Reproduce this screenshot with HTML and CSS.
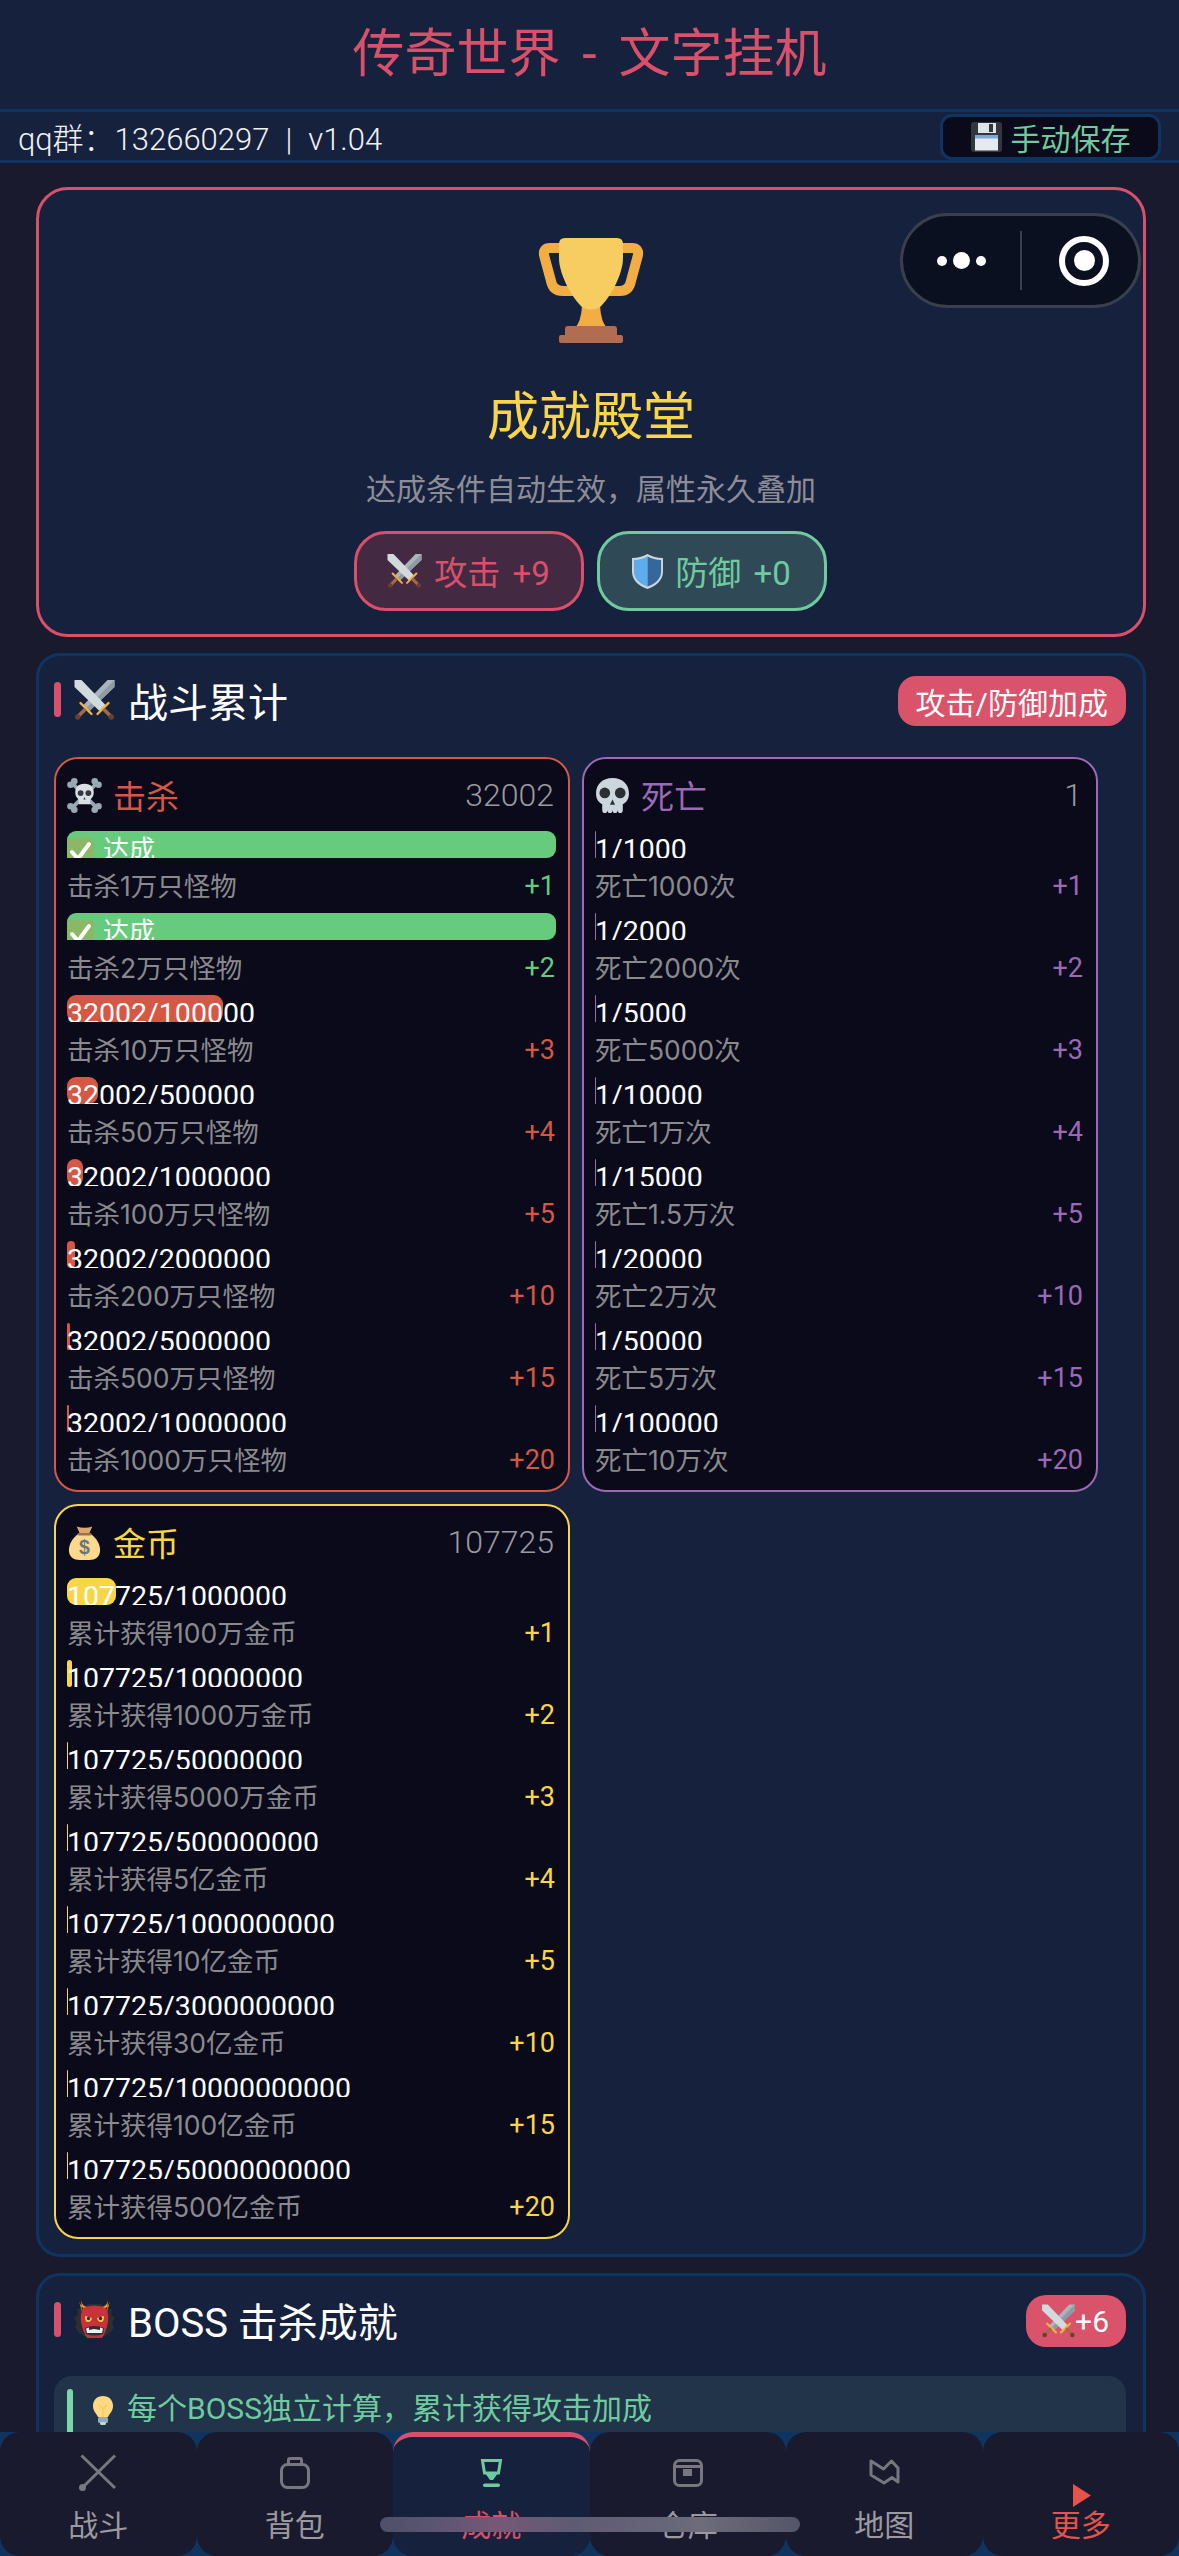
FILE: index.html
```html
<!DOCTYPE html>
<html lang="zh-CN">
<head>
  <meta charset="UTF-8">
  <meta name="viewport" content="width=device-width, initial-scale=1.0">
  <title>传奇世界 - 文字挂机</title>
  <link rel="stylesheet" href="styles.css">
</head>
<body>
  <!-- emoji drawn as symbols, there is no colour emoji font -->
  <svg class="defs" aria-hidden="true">
    <symbol id="swords" viewBox="0 0 40 40">
      <path d="M40 0H33L9 25L15 31L40 7Z" fill="#a9b4bb"/>
      <path d="M40 0L12 28L15 31L40 7Z" fill="#8f9ba3"/>
      <path d="M0 0H7L31 25L25 31L0 7Z" fill="#d3dade"/>
      <path d="M6 23L17 34" stroke="#f2b33d" stroke-width="2.4" stroke-linecap="round"/>
      <path d="M34 23L23 34" stroke="#f2b33d" stroke-width="2.4" stroke-linecap="round"/>
      <path d="M11 29L4 36M29 29L36 36" stroke="#a5694a" stroke-width="3.6"/>
      <circle cx="3.2" cy="37" r="2.7" fill="#6b3f2c"/>
      <circle cx="36.8" cy="37" r="2.7" fill="#6b3f2c"/>
    </symbol>
    <symbol id="skullbones" viewBox="0 0 36 36">
      <path d="M5 5L31 31M31 5L5 31" stroke="#99a8b3" stroke-width="4"/>
      <g fill="#99a8b3">
        <circle cx="3.6" cy="7" r="3.4"/><circle cx="7.5" cy="3.4" r="3.4"/>
        <circle cx="32.4" cy="7" r="3.4"/><circle cx="28.5" cy="3.4" r="3.4"/>
        <circle cx="3.6" cy="29" r="3.4"/><circle cx="7.5" cy="32.6" r="3.4"/>
        <circle cx="32.4" cy="29" r="3.4"/><circle cx="28.5" cy="32.6" r="3.4"/>
      </g>
      <path d="M18 6C11 6 8.500 10.500 8.500 15C8.500 18.500 10 20.500 12 22V27H24V22C26 20.500 27.500 18.500 27.500 15C27.500 10.500 25 6 18 6Z" fill="#d9dfe3"/>
      <circle cx="14" cy="15.500" r="3" fill="#32383d"/><circle cx="22" cy="15.500" r="3" fill="#32383d"/>
      <path d="M18 19.500L16.800 22H19.200Z" fill="#32383d"/>
    </symbol>
    <symbol id="skull" viewBox="0 0 32 34">
      <path d="M16 0C6 0 0 6.500 0 15C0 20.500 2.500 23.500 6 25.500V31Q6 34 8.500 34T11 31Q11 34 13.500 34T16 31Q16 34 18.500 34T21 31Q21 34 23.500 34T26 31V25.500C29.500 23.500 32 20.500 32 15C32 6.500 26 0 16 0Z" fill="#ccd6dd"/>
      <circle cx="8.500" cy="14.500" r="5.200" fill="#292f33"/><circle cx="23.500" cy="14.500" r="5.200" fill="#292f33"/>
      <path d="M16 21L13.500 26H18.500Z" fill="#292f33"/>
    </symbol>
    <symbol id="moneybag" viewBox="0 0 32 36">
      <path d="M10 9C3 14 0 20 0 26C0 33 5 36 11 36H21C27 36 32 33 32 26C32 20 29 14 22 9Z" fill="#fbd98c"/>
      <path d="M8 1.500Q16 4 24 1.500L21 8.500H11Z" fill="#d9a86a"/>
      <path d="M10 9.500H22" stroke="#a0714c" stroke-width="2.400" stroke-linecap="round"/>
      <text x="16" y="30" text-anchor="middle" class="dollar">$</text>
    </symbol>
    <symbol id="check" viewBox="0 0 27 27">
      <rect width="27" height="27" rx="4" fill="#8ab866"/>
      <path d="M5 14L11 21L22 6" fill="none" stroke="#fff" stroke-width="4" stroke-linecap="round" stroke-linejoin="round"/>
    </symbol>
    <symbol id="shield" viewBox="0 0 32 36">
      <path d="M16 0C11 3 6 4 0 4V18C0 27 7 33 16 36C25 33 32 27 32 18V4C26 4 21 3 16 0Z" fill="#ccd6dd"/>
      <path d="M16 2.500C11.500 5 7 6 2 6V18C2 26 8.500 31 16 33.500Z" fill="#5dadec"/>
      <path d="M16 2.500C20.500 5 25 6 30 6V18C30 26 23.500 31 16 33.500Z" fill="#35679a"/>
    </symbol>
    <symbol id="floppy" viewBox="0 0 31 30">
      <rect width="31" height="30" rx="3" fill="#31373d"/>
      <rect x="7" y="1" width="18" height="10" fill="#dde3e7"/>
      <rect x="18" y="2" width="4" height="8" fill="#31373d"/>
      <rect x="4" y="13" width="23" height="15.500" fill="#e4eaee"/>
      <rect x="4" y="13" width="23" height="3.500" fill="#7ba6dc"/>
    </symbol>
    <symbol id="oni" viewBox="0 0 41 40">
      <path d="M4 32L1 27L3 23L0 18L4 15L3 9L9 9L14 4H27L32 9L38 9L37 15L41 18L38 23L40 27L37 32L31 36H10Z" fill="#2b2f33"/>
      <path d="M8 12L5 1Q7 8 12 9L14 7Q8 7 7 0Z" fill="#f29c1f"/>
      <path d="M33 12L36 1Q34 8 29 9L27 7Q33 7 34 0Z" fill="#f29c1f"/>
      <path d="M9 8Q20 3 32 8Q35 14 34 22Q32 32 28 38H13Q9 32 7 22Q6 14 9 8Z" fill="#c9323a"/>
      <path d="M11 16L18 18Q17 22 14 22Q11 22 11 16ZM30 16L23 18Q24 22 27 22Q30 22 30 16Z" fill="#f7d04b"/>
      <circle cx="14.500" cy="18.500" r="1.700" fill="#292f33"/><circle cx="26.500" cy="18.500" r="1.700" fill="#292f33"/>
      <path d="M11 28Q20 24 30 28L29 34Q20 37 12 34Z" fill="#292f33"/>
      <path d="M12 28.500L15 27.500V30L20 29L26 30V27.500L29 28.500L28 33H13Z" fill="#eef1f3"/>
    </symbol>
    <symbol id="bulb" viewBox="0 0 20 29">
      <path d="M10 0C4 0 0 4 0 10C0 15 3 17 5 21H15C17 17 20 15 20 10C20 4 16 0 10 0Z" fill="#ffd983"/>
      <path d="M6 9L10 13L14 9M10 13V21" fill="none" stroke="#ffcc4d" stroke-width="1.500"/>
      <rect x="5" y="21" width="10" height="6" rx="1.500" fill="#99aab5"/>
      <rect x="7" y="26" width="6" height="3" rx="1.500" fill="#ccd6dd"/>
    </symbol>
  </svg>

  <header class="top-title">传奇世界 - 文字挂机</header>
  <div class="sub-bar">
    <span class="qq">qq群&#xFF1A;132660297<i class="sep">|</i>v1.04</span>
    <button class="save-btn"><svg class="ic-floppy"><use href="#floppy"/></svg>手动保存</button>
  </div>

  <main class="page">
    <section class="hero">
      <svg class="trophy" viewBox="0 0 106 105">
        <path d="M24 10H12Q5 10 6 17L13 43Q15 53 25 53H82Q91 53 93 43L100 17Q101 10 94 10H82" fill="none" stroke="#f2ae45" stroke-width="10"/>
        <path d="M44 68H62Q63 84 69 90H37Q43 84 44 68Z" fill="#f2ae45"/>
        <path d="M27 0H79Q85 0 85 6V20C85 38 70 62 62 69Q53 74 44 69C36 62 21 38 21 20V6Q21 0 27 0Z" fill="#f7cd62"/>
        <rect x="27" y="88" width="52" height="12" rx="3" fill="#b26c52"/>
        <rect x="21" y="97" width="64" height="8" rx="2" fill="#b26c52"/>
      </svg>
      <h1 class="hero-title">成就殿堂</h1>
      <p class="hero-sub">达成条件自动生效&#xFF0C;属性永久叠加</p>
      <div class="hero-stats">
        <span class="stat stat-atk"><svg class="ic-sword"><use href="#swords"/></svg>攻击 +9</span>
        <span class="stat stat-def"><svg class="ic-shield"><use href="#shield"/></svg>防御 +0</span>
      </div>
    </section>

    <section class="panel">
      <div class="panel-head">
        <h2 class="panel-title"><i class="mark"></i><svg class="ic-title"><use href="#swords"/></svg>战斗累计</h2>
        <span class="tag">攻击/防御加成</span>
      </div>
      <div class="card-grid">
        <div class="card kill">
          <div class="card-head">
            <span class="card-name"><svg class="ic-card"><use href="#skullbones"/></svg>击杀</span>
            <span class="card-val">32002</span>
          </div>
          <div class="ach done"><div class="bar"><div class="fill" style="width:100%"></div><span class="bar-text"><svg class="ic-check"><use href="#check"/></svg>达成</span></div><div class="ach-row"><span>击杀1万只怪物</span><span class="bonus">+1</span></div></div>
          <div class="ach done"><div class="bar"><div class="fill" style="width:100%"></div><span class="bar-text"><svg class="ic-check"><use href="#check"/></svg>达成</span></div><div class="ach-row"><span>击杀2万只怪物</span><span class="bonus">+2</span></div></div>
          <div class="ach"><div class="bar"><div class="fill" style="width:32%"></div><span class="bar-text">32002/100000</span></div><div class="ach-row"><span>击杀10万只怪物</span><span class="bonus">+3</span></div></div>
          <div class="ach"><div class="bar"><div class="fill" style="width:6.4%"></div><span class="bar-text">32002/500000</span></div><div class="ach-row"><span>击杀50万只怪物</span><span class="bonus">+4</span></div></div>
          <div class="ach"><div class="bar"><div class="fill" style="width:3.2%"></div><span class="bar-text">32002/1000000</span></div><div class="ach-row"><span>击杀100万只怪物</span><span class="bonus">+5</span></div></div>
          <div class="ach"><div class="bar"><div class="fill" style="width:1.6%"></div><span class="bar-text">32002/2000000</span></div><div class="ach-row"><span>击杀200万只怪物</span><span class="bonus">+10</span></div></div>
          <div class="ach"><div class="bar"><div class="fill" style="width:0.64%"></div><span class="bar-text">32002/5000000</span></div><div class="ach-row"><span>击杀500万只怪物</span><span class="bonus">+15</span></div></div>
          <div class="ach"><div class="bar"><div class="fill" style="width:0.32%"></div><span class="bar-text">32002/10000000</span></div><div class="ach-row"><span>击杀1000万只怪物</span><span class="bonus">+20</span></div></div>
        </div>

        <div class="card death">
          <div class="card-head">
            <span class="card-name"><svg class="ic-card"><use href="#skull"/></svg>死亡</span>
            <span class="card-val">1</span>
          </div>
          <div class="ach"><div class="bar"><div class="fill" style="width:0.1%"></div><span class="bar-text">1/1000</span></div><div class="ach-row"><span>死亡1000次</span><span class="bonus">+1</span></div></div>
          <div class="ach"><div class="bar"><div class="fill" style="width:0.05%"></div><span class="bar-text">1/2000</span></div><div class="ach-row"><span>死亡2000次</span><span class="bonus">+2</span></div></div>
          <div class="ach"><div class="bar"><div class="fill" style="width:0.02%"></div><span class="bar-text">1/5000</span></div><div class="ach-row"><span>死亡5000次</span><span class="bonus">+3</span></div></div>
          <div class="ach"><div class="bar"><div class="fill" style="width:0.01%"></div><span class="bar-text">1/10000</span></div><div class="ach-row"><span>死亡1万次</span><span class="bonus">+4</span></div></div>
          <div class="ach"><div class="bar"><div class="fill" style="width:0.01%"></div><span class="bar-text">1/15000</span></div><div class="ach-row"><span>死亡1.5万次</span><span class="bonus">+5</span></div></div>
          <div class="ach"><div class="bar"><div class="fill" style="width:0.01%"></div><span class="bar-text">1/20000</span></div><div class="ach-row"><span>死亡2万次</span><span class="bonus">+10</span></div></div>
          <div class="ach"><div class="bar"><div class="fill" style="width:0.01%"></div><span class="bar-text">1/50000</span></div><div class="ach-row"><span>死亡5万次</span><span class="bonus">+15</span></div></div>
          <div class="ach"><div class="bar"><div class="fill" style="width:0.01%"></div><span class="bar-text">1/100000</span></div><div class="ach-row"><span>死亡10万次</span><span class="bonus">+20</span></div></div>
        </div>

        <div class="card gold">
          <div class="card-head">
            <span class="card-name"><svg class="ic-card"><use href="#moneybag"/></svg>金币</span>
            <span class="card-val">107725</span>
          </div>
          <div class="ach"><div class="bar"><div class="fill" style="width:10%"></div><span class="bar-text">107725/1000000</span></div><div class="ach-row"><span>累计获得100万金币</span><span class="bonus">+1</span></div></div>
          <div class="ach"><div class="bar"><div class="fill" style="width:1.08%"></div><span class="bar-text">107725/10000000</span></div><div class="ach-row"><span>累计获得1000万金币</span><span class="bonus">+2</span></div></div>
          <div class="ach"><div class="bar"><div class="fill" style="width:0.22%"></div><span class="bar-text">107725/50000000</span></div><div class="ach-row"><span>累计获得5000万金币</span><span class="bonus">+3</span></div></div>
          <div class="ach"><div class="bar"><div class="fill" style="width:0.02%"></div><span class="bar-text">107725/500000000</span></div><div class="ach-row"><span>累计获得5亿金币</span><span class="bonus">+4</span></div></div>
          <div class="ach"><div class="bar"><div class="fill" style="width:0.01%"></div><span class="bar-text">107725/1000000000</span></div><div class="ach-row"><span>累计获得10亿金币</span><span class="bonus">+5</span></div></div>
          <div class="ach"><div class="bar"><div class="fill" style="width:0.01%"></div><span class="bar-text">107725/3000000000</span></div><div class="ach-row"><span>累计获得30亿金币</span><span class="bonus">+10</span></div></div>
          <div class="ach"><div class="bar"><div class="fill" style="width:0.01%"></div><span class="bar-text">107725/10000000000</span></div><div class="ach-row"><span>累计获得100亿金币</span><span class="bonus">+15</span></div></div>
          <div class="ach"><div class="bar"><div class="fill" style="width:0.01%"></div><span class="bar-text">107725/50000000000</span></div><div class="ach-row"><span>累计获得500亿金币</span><span class="bonus">+20</span></div></div>
        </div>
      </div>
    </section>

    <section class="panel">
      <div class="panel-head">
        <h2 class="panel-title"><i class="mark"></i><svg class="ic-title"><use href="#oni"/></svg>BOSS 击杀成就</h2>
        <span class="tag tag-small"><svg class="ic-tag"><use href="#swords"/></svg>+6</span>
      </div>
      <div class="tip"><i class="tip-mark"></i><svg class="ic-bulb"><use href="#bulb"/></svg>每个BOSS独立计算&#xFF0C;累计获得攻击加成</div>
    </section>
  </main>

  <!-- wechat mini program capsule -->
  <div class="capsule">
    <span class="caps-dots"><i></i><i class="big"></i><i></i></span>
    <span class="caps-line"></span>
    <span class="caps-target"><i></i></span>
  </div>

  <nav class="tabbar">
    <a class="tab">
      <span class="tab-icon"><svg viewBox="0 0 40 40"><path d="M3.500 3.500L37 36M37 3.500L5 35" fill="none" stroke="currentColor" stroke-width="3"/><circle cx="4.500" cy="35.500" r="3.500" fill="currentColor"/></svg></span>
      战斗
    </a>
    <a class="tab">
      <span class="tab-icon"><svg viewBox="0 0 40 40"><rect x="6.500" y="12.500" width="27" height="23" rx="6" fill="none" stroke="currentColor" stroke-width="3"/><path d="M13.500 12V8Q13.500 6.500 15 6.500H25Q26.500 6.500 26.500 8V12" fill="none" stroke="currentColor" stroke-width="3"/></svg></span>
      背包
    </a>
    <a class="tab active">
      <span class="tab-icon"><svg viewBox="0 0 40 40"><path d="M11.500 8.500H29.500L27.500 21H13.500Z" fill="none" stroke="currentColor" stroke-width="3"/><path d="M14 21H27L22 28H19Z" fill="currentColor"/><rect x="12" y="31.500" width="17" height="3.500" rx="1.700" fill="currentColor"/></svg></span>
      成就
    </a>
    <a class="tab">
      <span class="tab-icon"><svg viewBox="0 0 40 40"><rect x="6.500" y="8.500" width="27" height="25" rx="5" fill="none" stroke="currentColor" stroke-width="3"/><path d="M6.500 14.500H33.500" stroke="currentColor" stroke-width="3"/><rect x="15" y="17" width="9" height="7" fill="currentColor"/></svg></span>
      仓库
    </a>
    <a class="tab">
      <span class="tab-icon"><svg viewBox="0 0 40 40"><path d="M7 9L19.500 17L27.500 9L34 16V30L28 25.500L20 31L7 23Z" fill="none" stroke="currentColor" stroke-width="3" stroke-linejoin="round"/></svg></span>
      地图
    </a>
    <a class="tab more">
      <span class="tab-icon"><svg class="tri" viewBox="0 0 18 23"><path d="M0 0L18 11.500L0 23Z" fill="currentColor"/></svg></span>
      更多
    </a>
  </nav>
  <div class="home-bar"></div>
</body>
</html>
```
FILE: styles.css
```css
* {
  box-sizing: border-box;
}
html, body {
  margin: 0;
  padding: 0;
  height: 2556px;
  overflow: hidden;
}
body {
  background: #1a1a2e;
  color: #fff;
  font-family: Roboto, "Noto Sans CJK SC", sans-serif;
  position: relative;
}
.defs {
  position: absolute;
  width: 0;
  height: 0;
}
.dollar {
  font-family: "Liberation Sans", sans-serif;
  font-size: 20px;
  font-weight: 700;
  fill: #67757f;
}

/* top */
.top-title {
  height: 112px;
  background: #16213e;
  border-bottom: 3px solid #0f3460;
  color: #d9506a;
  font-size: 52px;
  line-height: 110px;
  text-align: center;
  word-spacing: 9px;
}
.sub-bar {
  height: 51px;
  background: #16213e;
  border-bottom: 3px solid #0f3460;
  padding: 0 18px 0 18px;
  display: flex;
  justify-content: space-between;
  align-items: center;
}
.qq {
  font-size: 31px;
  font-weight: 300;
  color: #f1f1f1;
  white-space: nowrap;
}
.sep {
  font-style: normal;
  margin: 0 16px;
}
.save-btn {
  width: 221px;
  height: 46px;
  margin-top: 2px;
  background: #0a0a1a;
  border: 3px solid #0f3460;
  border-radius: 12px;
  color: #6fcb9f;
  font-family: inherit;
  font-size: 30px;
  padding: 0;
  display: flex;
  justify-content: center;
  align-items: center;
  gap: 9px;
}
.ic-floppy {
  width: 31px;
  height: 30px;
}

.page {
  padding: 24px 33px 0 36px;
}

/* hero */
.hero {
  height: 450px;
  background: #16213e;
  border: 3px solid #d9506a;
  border-radius: 32px;
  padding-top: 48px;
  display: flex;
  flex-direction: column;
  align-items: center;
}
.trophy {
  width: 106px;
  height: 105px;
  display: block;
}
.hero-title {
  margin: 38px 0 0;
  font-size: 52px;
  line-height: 74px;
  font-weight: 400;
  color: #f9d648;
}
.hero-sub {
  margin: 13px 0 0;
  font-size: 30px;
  line-height: 44px;
  color: #8d8d98;
}
.hero-stats {
  margin: 19px 0 0 -2px;
  display: flex;
  gap: 13px;
}
.stat {
  width: 230px;
  height: 80px;
  border-radius: 32px;
  border: 3px solid;
  display: flex;
  justify-content: center;
  align-items: center;
  gap: 12px;
  font-size: 33px;
  word-spacing: 4px;
}
.stat-atk {
  background: #442943;
  border-color: #d9506a;
  color: #d9506a;
}
.stat-def {
  background: #2f4a56;
  border-color: #6fcb9f;
  color: #6fcb9f;
}
.ic-sword {
  width: 35px;
  height: 34px;
}
.ic-shield {
  width: 31px;
  height: 35px;
}

/* panels */
.panel {
  margin-top: 16px;
  background: #16213e;
  border: 3px solid #0f3460;
  border-radius: 24px;
  padding: 20px 17px 15px 15px;
}
.panel-head {
  height: 50px;
  margin-bottom: 31px;
  display: flex;
  justify-content: space-between;
  align-items: center;
}
.panel-title {
  margin: 0 0 3px;
  font-size: 40px;
  font-weight: 400;
  display: flex;
  align-items: center;
}
.mark {
  width: 7px;
  height: 35px;
  border-radius: 4px;
  background: #d9506a;
  margin-right: 13px;
}
.ic-title {
  width: 41px;
  height: 40px;
  margin-right: 13px;
}
.tag {
  height: 50px;
  padding: 0 18px;
  border-radius: 18px;
  background: #d9536a;
  font-size: 30px;
  display: flex;
  align-items: center;
}
.tag-small {
  height: 52px;
  padding: 0 17px 0 16px;
  border-radius: 20px;
}
.ic-tag {
  width: 33px;
  height: 34px;
}

/* stat cards */
.card-grid {
  display: grid;
  grid-template-columns: repeat(2, 516px);
  gap: 12px;
  align-items: start;
}
.card {
  background: #0a0a1a;
  border: 2px solid var(--c);
  border-radius: 24px;
  padding: 11px 12px 12px 11px;
}
.kill { --c: #d55745; }
.death { --c: #9b69b5; }
.gold { --c: #f9d648; }
.card-head {
  height: 52px;
  margin-bottom: 9px;
  padding-bottom: 2px;
  display: flex;
  justify-content: space-between;
  align-items: center;
}
.card-name {
  color: var(--c);
  font-size: 33px;
  display: flex;
  align-items: center;
  gap: 11px;
}
.ic-card {
  width: 35px;
  height: 35px;
}
.card-val {
  font-size: 32px;
  font-weight: 300;
  color: #9a9aa0;
  padding-right: 2px;
}
.ach {
  margin-bottom: 9px;
}
.ach:last-child {
  margin-bottom: 0;
}
.bar {
  height: 27px;
  position: relative;
  overflow: hidden;
}
.fill {
  position: absolute;
  left: 0;
  top: 0;
  height: 27px;
  min-width: 1px;
  background: var(--c);
  border-radius: 9px;
}
.done .fill {
  background: #66cb7d;
}
.bar-text {
  position: absolute;
  left: 0;
  top: 0;
  font-size: 28.5px;
  line-height: 38px;
  white-space: nowrap;
  color: #fff;
}
.done .bar-text {
  font-size: 26px;
}
.ic-check {
  width: 27px;
  height: 27px;
  margin-right: 9px;
  vertical-align: -6px;
}
.ach-row {
  margin-top: 10px;
  height: 36px;
  padding-right: 1px;
  font-family: Inter, "Noto Sans CJK SC", sans-serif;
  font-size: 26.5px;
  line-height: 36px;
  color: #8a8a8e;
  display: flex;
  justify-content: space-between;
}
.bonus {
  font-family: Roboto, sans-serif;
  font-size: 27px;
  color: var(--c);
}
.done .bonus {
  color: #66cb7d;
}

/* tip */
.tip {
  margin-top: -1px;
  height: 90px;
  border-radius: 18px;
  background: #223449;
  padding: 13px 13px 0;
  color: #6fcb9f;
  font-size: 30px;
  display: flex;
  align-items: flex-start;
  line-height: 40px;
}
.tip-mark {
  width: 6px;
  height: 60px;
  border-radius: 3px;
  background: #7bd6a8;
  margin-right: 20px;
}
.ic-bulb {
  width: 20px;
  height: 29px;
  margin: 7px 14px 0 0;
}

/* overlays */
.capsule {
  position: absolute;
  left: 900px;
  top: 213px;
  width: 241px;
  height: 95px;
  border-radius: 48px;
  background: #0b1020;
  border: 3px solid #3a3f4d;
  display: flex;
  align-items: center;
}
.caps-dots {
  width: 117px;
  display: flex;
  justify-content: center;
  align-items: center;
  gap: 6px;
}
.caps-dots i {
  width: 10px;
  height: 10px;
  border-radius: 50%;
  background: #fff;
}
.caps-dots i.big {
  width: 17px;
  height: 17px;
}
.caps-line {
  width: 2px;
  height: 59px;
  background: #3a3f4d;
}
.caps-target {
  width: 50px;
  height: 50px;
  margin-left: 37px;
  border: 6px solid #fff;
  border-radius: 50%;
  display: flex;
  justify-content: center;
  align-items: center;
}
.caps-target i {
  width: 21px;
  height: 21px;
  border-radius: 50%;
  background: #fff;
}

.tabbar {
  position: fixed;
  left: 0;
  right: 0;
  bottom: 0;
  height: 124px;
  background: #0f3460;
  display: grid;
  grid-template-columns: repeat(6, 1fr);
}
.tab {
  background: #1a1a2e;
  border-radius: 20px;
  padding-top: 20px;
  color: #9a9aa0;
  font-size: 30px;
  line-height: 36px;
  text-align: center;
}
.tab-icon {
  height: 56px;
  color: #77777f;
  display: flex;
  justify-content: center;
  align-items: flex-start;
}
.tab-icon svg {
  width: 40px;
  height: 40px;
}
.tab.active {
  background: #16213e;
  border-top: 5px solid #d9506a;
  padding-top: 15px;
  color: #d9506a;
}
.tab.active .tab-icon {
  color: #6fcb9f;
}
.tab.more {
  color: #e5534b;
}
.tab.more .tab-icon {
  color: #e5534b;
  align-items: flex-end;
  padding: 0 0 1px 3px;
}
.tab.more .tab-icon .tri {
  width: 18px;
  height: 23px;
}
.home-bar {
  position: fixed;
  left: 380px;
  top: 2517px;
  width: 420px;
  height: 15px;
  border-radius: 8px;
  background: linear-gradient(90deg, #4d5068 0%, #5a5470 12%, #765878 28%, #5e5a72 46%, #66667a 68%, #6c6c7a 76%, #55556a 100%);
}
```
